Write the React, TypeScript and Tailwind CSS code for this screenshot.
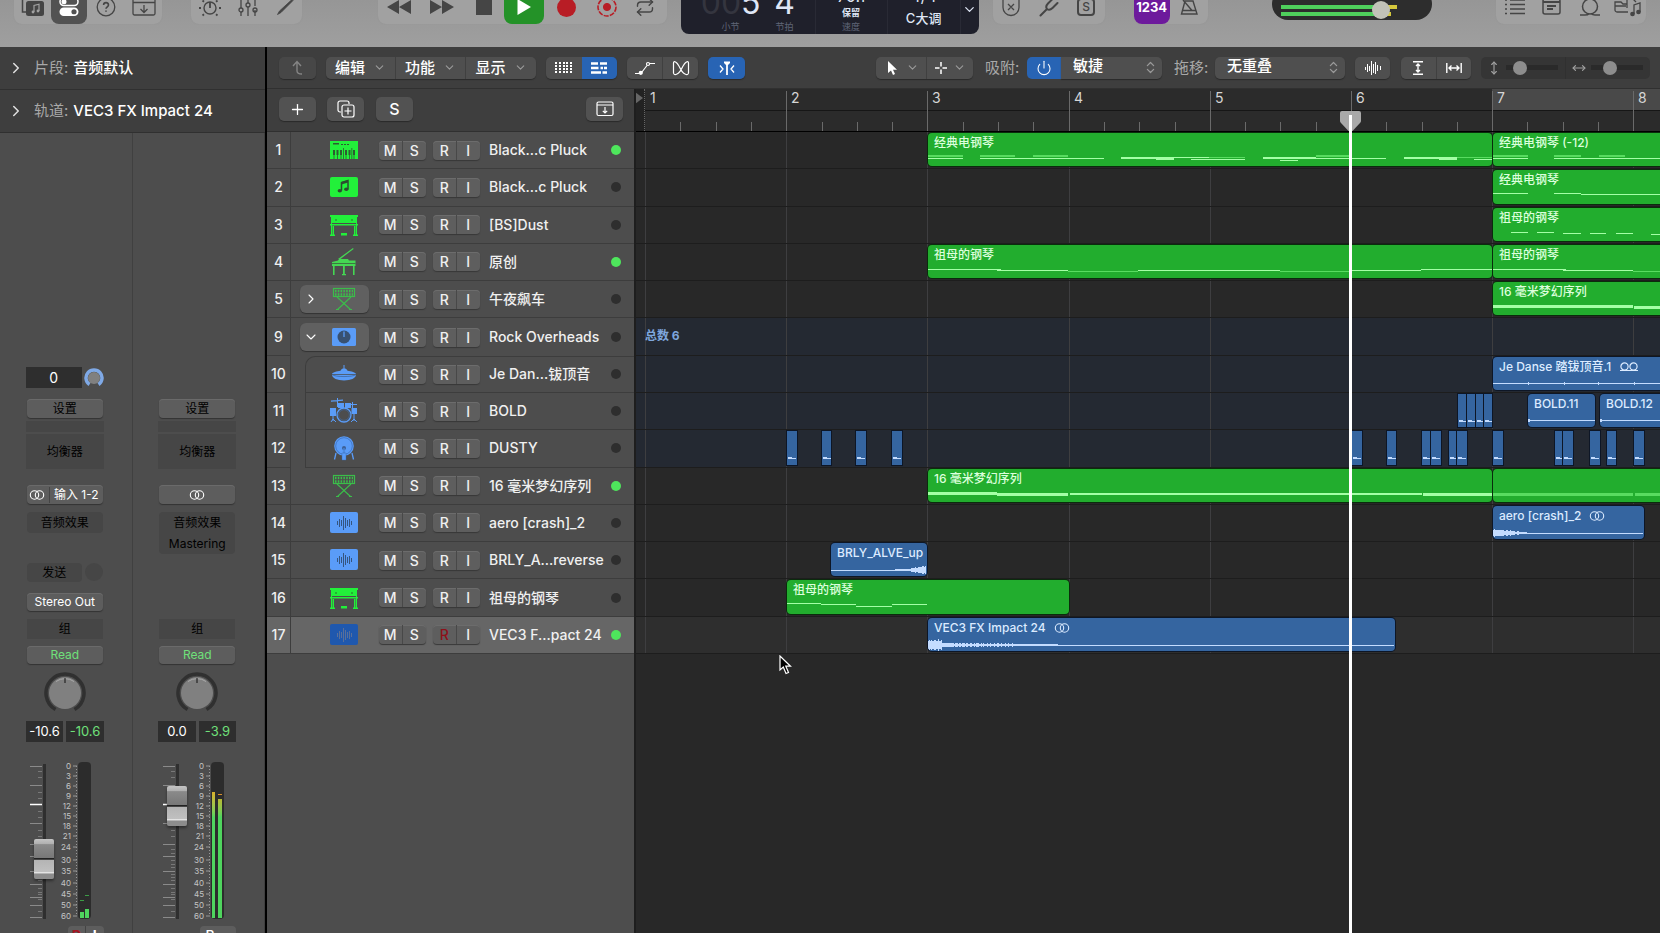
import { useState } from "react";
import type { ReactNode } from "react";
import { ChevronDown, ChevronRight, ChevronsUpDown, MoveHorizontal, MoveVertical, Plus, Power, Repeat } from "lucide-react";
import clsx from "clsx";

type Shape = [x: number, y: number, w: number, h: number, dim?: boolean];

type Clip = {
  start: number;
  end: number;
  label?: string;
  badge?: "stereo" | "loop";
  slim?: boolean;
  shapes?: Shape[];
  wave?: "impact" | "crash" | "reverse";
};

type Track = {
  num: number;
  name: string;
  icon: keyof typeof trackIcons;
  color: "green" | "blue";
  active?: boolean;
  folder?: "open" | "closed";
  child?: boolean;
  selected?: boolean;
  armed?: boolean;
  clips: Clip[];
};

// Horizontal zoom of the arrange area
const BAR = 141.2;
const ORIGIN = 11;
const barToPx = (bar: number) => Math.round(ORIGIN + (bar - 1) * BAR);

const GREEN = "#22f03a";
const BLUE = "#5a9cf8";
const BARS = [1, 2, 3, 4, 5, 6, 7, 8];

const audioBars = "M7 12h1v4H7zM9 10h1v8H9zM11 11h1v6h-1zM13 7h1v14h-1zM15 9h1v10h-1zM17 11h1v6h-1zM19 10h1v8h-1zM21 12h1v4h-1z";

const trackIcons = {
  synth: (
    <g fill={GREEN}>
      <path d="M0 5h28v18H0z" />
      <path d="M3 7h6v1.500H3zM11 8h2v1h-2zM14 8h2v1h-2zM17 8h2v1h-2z" fill="#2c5c30" />
      <path d="M3 14h2v5H3zM6.500 14h2v5h-2zM10 14h2v5h-2zM15 14h2v5h-2zM18.500 14h2v5h-2zM23 14h2v5h-2z" fill="#2c5c30" />
      <path d="M4 19v4M7.500 19v4M11 19v4M13.500 12v11M16 19v4M19.500 19v4M21.800 12v11M24 19v4" stroke="#2c5c30" strokeWidth=".8" />
    </g>
  ),
  note: (
    <g>
      <rect y="4" width="28" height="20" rx="2" fill={GREEN} />
      <path d="M11.500 17.500V9.500l6.500-2v8.500" fill="none" stroke="#2c4c30" strokeWidth="1.500" />
      <path d="M11.500 9l6.500-2v2.500l-6.500 2z" fill="#2c4c30" />
      <ellipse cx="9.800" cy="17.800" rx="2.200" ry="1.700" fill="#2c4c30" />
      <ellipse cx="16.300" cy="16.200" rx="2.200" ry="1.700" fill="#2c4c30" />
    </g>
  ),
  upright: (
    <g fill={GREEN}>
      <path d="M0 4h28v2H0zM1 6h26v6H1zM0 13h28v1.500H0z" />
      <path d="M2.500 15H4v9H2.500zM24 15h1.500v9H24zM0 23.500h5V25H0zM23 23.500h5V25h-5zM11 22h6v2.500h-6z" />
      <path d="M1 12h1v12H1zM26 12h1v12h-1z" />
      <circle cx="6" cy="9" r=".8" fill="#2c5c30" />
      <circle cx="22" cy="9" r=".8" fill="#2c5c30" />
    </g>
  ),
  grand: (
    <g fill="#45d653">
      <path d="M8 11L23 0l.6.900L10.500 11z" />
      <path d="M9 11h9l1 1.500h6.500V18H2v-4l6-1.500z" />
      <path d="M2 15.500h23.500" stroke="#3b5c3e" strokeWidth=".8" />
      <path d="M3 18h1.600v9H3zM13 18h1.800v9H13zM23 18h1.600v9H23zM12 26h4v1.200h-4z" />
    </g>
  ),
  stand: (
    <g fill="none" stroke="#3bbd4a">
      <rect x="3.500" y="3.500" width="21" height="8" strokeWidth="1.200" />
      <path d="M5 6h18M5 9.500h18" strokeDasharray="1.500 1.300" strokeWidth="2.600" />
      <path d="M7 12l13.500 12.500M21 12L7.500 24.500M6 24.500h3M19 24.500h3" strokeWidth="1.100" />
    </g>
  ),
  summing: (
    <g>
      <rect x="2" y="5" width="24" height="18" rx="1.500" fill={BLUE} />
      <circle cx="14" cy="14" r="6.500" fill="#385172" />
      <path d="M14 8.500V14" stroke={BLUE} strokeWidth="1.300" />
    </g>
  ),
  cymbal: (
    <g fill={BLUE}>
      <path d="M13.500 5h1v4h-1z" />
      <path d="M2 14c0-1.500 5-2.800 8.500-3.200C11 9 12.500 8.500 14 8.500s3 .5 3.500 2.300C21 11.200 26 12.500 26 14z" />
      <path d="M2 14.800h24c0 3.500-5.500 5.700-12 5.700S2 18.300 2 14.800z" />
      <path d="M2 14.600c3 2.600 21 2.600 24 0" fill="none" stroke="#3a5f92" strokeWidth=".7" />
    </g>
  ),
  drumkit: (
    <g fill={BLUE}>
      <path d="M1 3.500l12-1v1.200l-12 1zM7 1h1v9H7zM19 7h8v1h-8zM22 5h1v6h-1z" />
      <path d="M8 6h6v5H8zM15 6h6v5h-6zM0 11h6v8H0zM21.500 11H27v6h-5.500z" />
      <path d="M3 19v5M1 25l2-3 3 3M24 17v7M21 25l3-3 3 3" stroke={BLUE} fill="none" />
      <circle cx="14" cy="18" r="7" fill="#4d4d4d" stroke={BLUE} strokeWidth="1.300" />
      <circle cx="14" cy="18" r="5.400" fill="none" stroke="#3d6aa5" strokeWidth=".7" />
    </g>
  ),
  kick: (
    <g fill={BLUE}>
      <circle cx="14" cy="12" r="9.800" />
      <circle cx="14" cy="12" r="8.300" fill="none" stroke="#3a6cb4" strokeWidth=".7" />
      <path d="M6 19l-1.500 6.500M22 19l1.500 6.500" stroke={BLUE} strokeWidth="1.300" />
      <circle cx="14" cy="14" r="2" fill="#3d5f94" />
      <path d="M13.400 14h1.200v5h-1.200zM12 19h4v7h-4z" stroke="#3a6cb4" strokeWidth=".4" />
    </g>
  ),
  audio: (
    <g>
      <rect y="3" width="28" height="21" rx="2" fill={BLUE} />
      <path d={audioBars} fill="#35557f" />
    </g>
  ),
  audioDim: (
    <g>
      <rect y="3" width="28" height="21" rx="2" fill="#1f58ae" />
      <path d={audioBars} fill="#5a7099" />
    </g>
  ),
};

const pluckNotes: Shape[] = [
  [0, 22, 35, 2, true], [0, 25, 35, 1],
  [52, 22, 35, 2, true], [52, 25, 124, 1], [105, 22, 35, 2, true],
  [193, 24, 53, 2], [228, 26, 18, 1], [246, 24, 35, 1], [263, 26, 18, 1], [281, 24, 36, 1, true], [281, 26, 36, 1],
  [335, 24, 35, 2], [352, 27, 18, 1], [370, 24, 18, 2], [388, 22, 35, 2, true], [388, 25, 70, 1],
  [476, 24, 53, 2], [511, 26, 18, 1], [529, 24, 36, 1, true], [546, 26, 19, 1],
];

const hits = (starts: number[], width = 0.075): Clip[] =>
  starts.map((start) => ({ start, end: start + width, slim: true, shapes: [[1, 26, 4, 2], [4, 27, 5, 1]] as Shape[] }));

const tracks: Track[] = [
  {
    num: 1, name: "Black...c Pluck", icon: "synth", color: "green", active: true,
    clips: [
      { start: 3, end: 7, label: "经典电钢琴", shapes: pluckNotes },
      { start: 7, end: 9, label: "经典电钢琴 (-12)", shapes: [[0, 22, 35, 2, true], [0, 25, 35, 1], [61, 22, 27, 2, true], [61, 25, 230, 1], [106, 22, 26, 2, true]] },
    ],
  },
  {
    num: 2, name: "Black...c Pluck", icon: "note", color: "green",
    clips: [{ start: 7, end: 9, label: "经典电钢琴", shapes: [[0, 23, 35, 1], [61, 23, 27, 1], [88, 24, 200, 1]] }],
  },
  {
    num: 3, name: "[BS]Dust", icon: "upright", color: "green",
    clips: [{ start: 7, end: 9, label: "祖母的钢琴", shapes: [[18, 24, 17, 1], [44, 24, 17, 1], [70, 25, 18, 1], [97, 25, 16, 1], [123, 25, 17, 1], [158, 26, 17, 1]] }],
  },
  {
    num: 4, name: "原创", icon: "grand", color: "green", active: true,
    clips: [
      { start: 3, end: 7, label: "祖母的钢琴", shapes: [[0, 24, 73, 1], [69, 25, 71, 1], [140, 26, 70, 1, true], [210, 25, 142, 1], [352, 26, 72, 1, true], [424, 25, 69, 1], [493, 24, 72, 1]] },
      { start: 7, end: 9, label: "祖母的钢琴", shapes: [[0, 24, 73, 1], [70, 25, 70, 1], [140, 26, 140, 1, true]] },
    ],
  },
  {
    num: 5, name: "午夜飙车", icon: "stand", color: "green", folder: "closed",
    clips: [{ start: 7, end: 9, label: "16 毫米梦幻序列", shapes: [[0, 23, 140, 3], [141, 24, 140, 3]] }],
  },
  { num: 9, name: "Rock Overheads", icon: "summing", color: "blue", folder: "open", clips: [] },
  {
    num: 10, name: "Je Dan...钹顶音", icon: "cymbal", color: "blue", child: true,
    clips: [{ start: 7, end: 9, label: "Je Danse 踏钹顶音.1", badge: "loop", shapes: [[0, 26, 290, 1], [35, 25, 1, 3], [71, 25, 1, 3], [105, 25, 1, 3], [141, 25, 1, 3]] }],
  },
  {
    num: 11, name: "BOLD", icon: "drumkit", color: "blue", child: true,
    clips: [
      ...hits([6.75, 6.8125, 6.875, 6.9375], 0.0625),
      { start: 7.25, end: 7.73, label: "BOLD.11", shapes: [[0, 26, 100, 1], [0, 25, 2, 3]] },
      { start: 7.755, end: 9, label: "BOLD.12", shapes: [[0, 26, 200, 1], [0, 25, 2, 3]] },
    ],
  },
  {
    num: 12, name: "DUSTY", icon: "kick", color: "blue", child: true,
    clips: hits([2, 2.245, 2.49, 2.745, 6, 6.245, 6.495, 6.56, 6.685, 6.745, 7, 7.435, 7.495, 7.685, 7.805, 8]),
  },
  {
    num: 13, name: "16 毫米梦幻序列", icon: "stand", color: "green", active: true,
    clips: [
      { start: 3, end: 7, label: "16 毫米梦幻序列", shapes: [[0, 23, 69, 3], [69, 24, 71, 3], [142, 24, 352, 2], [495, 24, 70, 3]] },
      { start: 7, end: 9, shapes: [[0, 24, 69, 3, true], [69, 24, 71, 3, true], [142, 24, 140, 3, true]] },
    ],
  },
  {
    num: 14, name: "aero [crash]_2", icon: "audio", color: "blue",
    clips: [{ start: 7, end: 8.075, label: "aero [crash]_2", badge: "stereo", wave: "crash" }],
  },
  {
    num: 15, name: "BRLY_A...reverse", icon: "audio", color: "blue",
    clips: [{ start: 2.31, end: 3, label: "BRLY_ALVE_up", wave: "reverse" }],
  },
  {
    num: 16, name: "祖母的钢琴", icon: "upright", color: "green",
    clips: [{ start: 2, end: 4, label: "祖母的钢琴", shapes: [[0, 23, 34, 1], [34, 24, 35, 1], [69, 26, 36, 1], [105, 24, 35, 1]] }],
  },
  {
    num: 17, name: "VEC3 F...pact 24", icon: "audioDim", color: "blue", active: true, selected: true, armed: true,
    clips: [{ start: 3, end: 6.315, label: "VEC3 FX Impact 24", badge: "stereo", wave: "impact" }],
  },
];

function wavePath(kind: "impact" | "crash" | "reverse", width: number) {
  let d = "";
  for (let x = 0; x < width - 2; x += 1) {
    const jitter = 0.65 + 0.35 * Math.abs(Math.sin(x * 2.3) * Math.cos(x * 0.9));
    let amp = 0.5;
    if (kind === "impact") amp = x < 14 ? 6 * jitter : x < 130 ? Math.max(1, (2.6 - x / 80) * jitter) : 0.5;
    if (kind === "crash") amp = x < 34 ? Math.max(1, (4.5 - x / 9) * jitter) : 0.5;
    if (kind === "reverse") amp = x > width - 18 ? (5.5 - (width - x) / 5) * jitter : x > 63 ? 1.2 : 0.5;
    d += `M${x} ${27 - amp}h1v${amp * 2}h-1z`;
  }
  return d;
}

function StereoIcon({ className }: { className?: string }) {
  return (
    <svg viewBox="0 0 16 10" className={clsx("h-[10px] w-4", className)} fill="none" stroke="currentColor" strokeWidth="1.100">
      <circle cx="5.500" cy="5" r="4.200" />
      <circle cx="10.500" cy="5" r="4.200" />
    </svg>
  );
}

function LoopIcon() {
  return (
    <svg viewBox="0 0 20 10" className="h-[10px] w-5" fill="none" stroke="currentColor" strokeWidth="1.200">
      <circle cx="5.500" cy="4.500" r="3.600" />
      <circle cx="14.500" cy="4.500" r="3.600" />
      <path d="M1 8.500h18" />
    </svg>
  );
}

/* ---------- Control bar ---------- */

function BarGroup({ className, children }: { className?: string; children: ReactNode }) {
  return <div className={clsx("-mt-3 flex h-9 items-center rounded-lg bg-[#a1a1a1] text-[#454545] shadow-[0_0_1px_#8888]", className)}>{children}</div>;
}

function BarButton({ label, className, children }: { label: string; className?: string; children: ReactNode }) {
  return (
    <button aria-label={label} className={clsx("flex h-9 items-center justify-center pt-0.5", className)}>
      {children}
    </button>
  );
}

function Display() {
  return (
    <div className="flex h-[34px] w-[298px] shrink-0 overflow-hidden rounded-b-lg bg-[#1f202b] text-[#dfe6f5]">
      <div className="flex w-[134px] pl-5">
        <div className="flex w-[60px] flex-col items-center">
          <span className="-mt-[15px] text-[32px] leading-[36px] font-normal">
            <span className="text-[#34353f]">00</span>5
          </span>
          <span className="mt-px text-[9px] leading-[10px] text-[#5f6577]">小节</span>
        </div>
        <div className="flex w-12 flex-col items-center">
          <span className="-mt-[15px] text-[32px] leading-[36px] font-normal">4</span>
          <span className="mt-px text-[9px] leading-[10px] text-[#5f6577]">节拍</span>
        </div>
      </div>
      <div className="flex w-[73px] flex-col items-center border-x border-[#292a35]">
        <span className="-mt-[14px] text-base leading-5">70.1</span>
        <span className="text-[9px] leading-[13px] font-bold">保留</span>
        <span className="text-[9px] leading-[15px] text-[#5f6577]">速度</span>
      </div>
      <div className="flex w-[73px] flex-col items-center border-r border-[#292a35]">
        <span className="-mt-[14px] text-base leading-5">4/4</span>
        <span className="mt-0.5 text-[13px] leading-[20px] font-medium">C大调</span>
      </div>
      <button aria-label="显示模式" className="flex flex-1 justify-center pt-0.5">
        <ChevronDown size={15} />
      </button>
    </div>
  );
}

function MasterVolume() {
  return (
    <div className="relative -mt-3 h-8 w-40 shrink-0 rounded-full bg-[#2d2d2d]">
      <div className="flex flex-col gap-[3px] pt-[17px] pl-[9px]">
        <div className="flex h-1">
          <div className="w-[100px] bg-[#4fcf5c]" />
          <div className="w-4 bg-[#d5c83c]" />
        </div>
        <div className="flex h-1">
          <div className="w-[100px] bg-[#4fcf5c]" />
          <div className="w-[10px] bg-[#d5c83c]" />
        </div>
      </div>
      <input
        type="range"
        aria-label="主音量"
        defaultValue={70}
        className="absolute inset-x-0 top-3 mx-0 h-[20px] w-full appearance-none bg-transparent [&::-webkit-slider-thumb]:size-[18px] [&::-webkit-slider-thumb]:appearance-none [&::-webkit-slider-thumb]:rounded-full [&::-webkit-slider-thumb]:bg-[#c2c2b8]"
      />
    </div>
  );
}

function ControlBar() {
  return (
    <header className="flex h-[47px] shrink-0 items-start overflow-hidden bg-linear-to-b from-[#969696] to-[#9f9f9f] px-[14px]">
      <BarGroup className="w-[148px]">
        <BarButton label="资源库" className="w-[37px]">
          <svg viewBox="0 0 24 24" className="size-6" fill="none" stroke="currentColor" strokeWidth="1.500">
            <path d="M5 17H1.500V3h15a2 2 0 012 2" />
            <rect x="5" y="6" width="18" height="15" rx="2.500" fill="currentColor" stroke="none" />
            <path d="M13 17v-6.500l5-1.300V16" stroke="#a1a1a1" strokeWidth="1.200" />
            <circle cx="12" cy="17" r="1.400" fill="#a1a1a1" stroke="none" />
            <circle cx="17" cy="16" r="1.400" fill="#a1a1a1" stroke="none" />
          </svg>
        </BarButton>
        <BarButton label="检查器" className="w-9 rounded-lg bg-[#525252] text-white">
          <svg viewBox="0 0 20 22" className="h-[22px] w-5">
            <rect x="1" y="2" width="18" height="7.500" rx="3.750" fill="none" stroke="currentColor" strokeWidth="1.500" />
            <circle cx="5" cy="5.800" r="2.500" fill="currentColor" />
            <rect x=".5" y="11.500" width="19" height="8.500" rx="4.250" fill="currentColor" />
            <circle cx="15" cy="15.750" r="2.600" fill="#525252" />
          </svg>
        </BarButton>
        <BarButton label="快速帮助" className="w-[38px]">
          <svg viewBox="0 0 20 20" className="size-5" fill="none" stroke="currentColor" strokeWidth="1.300">
            <circle cx="10" cy="10" r="8.800" />
            <path d="M7.600 8c0-3.200 4.900-3.200 4.900 0 0 1.800-2.500 1.800-2.500 3.800M10 13.500v1.300" strokeWidth="1.600" />
          </svg>
        </BarButton>
        <BarButton label="工具栏" className="flex-1">
          <svg viewBox="0 0 24 20" className="h-5 w-6" fill="none" stroke="currentColor" strokeWidth="1.300">
            <rect x="1" y="1" width="22" height="17" rx="1.500" />
            <path d="M1 5.500h22M12 8v7M8.500 12l3.500 3.500 3.500-3.500" />
          </svg>
        </BarButton>
      </BarGroup>
      <BarGroup className="ml-[29px] w-[111px]">
        <BarButton label="智能控制" className="w-[38px]">
          <svg viewBox="0 0 24 22" className="h-[22px] w-6" fill="none" stroke="currentColor" strokeWidth="1.400">
            <circle cx="12" cy="12" r="6" />
            <path d="M12 6v6M12 1v2M4.500 4.500l1.500 1.300M19.500 4.500L18 5.800M1 12h2M21 12h2M4.500 19.500L6 18.200M19.500 19.500L18 18.200" strokeWidth="1.800" />
          </svg>
        </BarButton>
        <BarButton label="混音器" className="w-[38px]">
          <svg viewBox="0 0 20 20" className="size-5" fill="none" stroke="currentColor" strokeWidth="1.300">
            <path d="M3 0v11M3 15v4M10 0v6M10 10v9M17 0v9M17 13v6" />
            <circle cx="3" cy="13" r="2" />
            <circle cx="10" cy="8" r="2" />
            <circle cx="17" cy="13" r="2" />
          </svg>
        </BarButton>
        <BarButton label="编辑器" className="flex-1">
          <svg viewBox="0 0 20 20" className="size-5" stroke="currentColor" fill="currentColor">
            <path d="M2.500 17.500l2-3.500L17 2.500l1 1L6 15.500z" strokeWidth=".8" />
          </svg>
        </BarButton>
      </BarGroup>

      <div className="min-w-3 flex-[76]" />

      <BarGroup className="w-[289px]">
        <BarButton label="倒回" className="w-[43px]">
          <svg viewBox="0 0 26 16" className="h-4 w-[26px]" fill="currentColor"><path d="M13 1v14L1 8zM25 1v14L13 8z" /></svg>
        </BarButton>
        <BarButton label="快进" className="w-[43px]">
          <svg viewBox="0 0 26 16" className="h-4 w-[26px]" fill="currentColor"><path d="M13 1v14l12-7zM1 1v14l12-7z" /></svg>
        </BarButton>
        <BarButton label="停止" className="w-[40px]">
          <span className="size-4 bg-[#454545]" />
        </BarButton>
        <BarButton label="播放" className="w-10 rounded-lg bg-[#249228] text-white">
          <svg viewBox="0 0 16 18" className="h-[18px] w-4" fill="currentColor"><path d="M1.500 1v16L15 9z" /></svg>
        </BarButton>
        <BarButton label="录音" className="w-[46px]">
          <span className="size-[19px] rounded-full bg-[#b81d25]" />
        </BarButton>
        <BarButton label="捕捉录音" className="w-[34px]">
          <svg viewBox="0 0 22 22" className="size-[22px]" fill="none" stroke="#b81d25">
            <circle cx="11" cy="11" r="9" strokeWidth="1.600" strokeDasharray="5 1.200" />
            <circle cx="11" cy="11" r="3.600" fill="#b81d25" />
          </svg>
        </BarButton>
        <BarButton label="循环" className="flex-1">
          <Repeat size={20} strokeWidth={1.7} />
        </BarButton>
      </BarGroup>
      <div className="w-[14px]" />
      <Display />
      <div className="w-[14px]" />
      <BarGroup className="w-28">
        <BarButton label="替换" className="w-[37px]">
          <svg viewBox="0 0 18 20" className="h-5 w-[18px]" fill="none" stroke="currentColor" strokeWidth="1.300">
            <path d="M1 1h16v9.500a8 8 0 01-16 0zM6 7l6 6M12 7l-6 6" />
          </svg>
        </BarButton>
        <BarButton label="调音器" className="w-[38px]">
          <svg viewBox="0 0 22 22" className="size-[22px]" fill="none" stroke="currentColor" strokeWidth="2" strokeLinecap="round">
            <path d="M2.500 19.500L9 13M9 13c-1.500-2-.5-4 1-5.500L15 2.500M9 13c2 1.500 4 .5 5.500-1L19.500 7" />
          </svg>
        </BarButton>
        <BarButton label="独奏" className="flex-1">
          <span className="flex size-[18px] items-center justify-center rounded-sm border-2 border-[#454545] text-xs font-medium">S</span>
        </BarButton>
      </BarGroup>
      <BarGroup className="ml-[29px] w-[74px]">
        <BarButton label="预备拍" className="w-9 rounded-lg bg-[#6d1a9c] pt-1 text-[13px] font-bold text-white">
          1234
        </BarButton>
        <BarButton label="节拍器" className="flex-1">
          <svg viewBox="0 0 20 20" className="size-5" fill="none" stroke="currentColor" strokeWidth="1.400">
            <path d="M6 4h8l4 13H2.500zM3.500 13.500h13M4 3l9 10.500" />
          </svg>
        </BarButton>
      </BarGroup>

      <div className="min-w-3 flex-[65]" />
      <MasterVolume />
      <div className="min-w-3 flex-[64]" />

      <BarGroup className="w-[150px]">
        <BarButton label="列表编辑器" className="w-[37px]">
          <svg viewBox="0 0 20 18" className="h-[18px] w-5" stroke="currentColor" strokeWidth="1.500">
            <path d="M0 2h2M0 6.500h2M0 11h2M0 15.500h2M5 2h15M5 6.500h15M5 11h15M5 15.500h15" />
          </svg>
        </BarButton>
        <BarButton label="备忘录" className="w-[38px]">
          <svg viewBox="0 0 20 18" className="h-[18px] w-5" fill="none" stroke="currentColor" strokeWidth="1.500">
            <rect x="1" y="1" width="17" height="15" rx="2" />
            <path d="M1 4h17M5 8h9M5 11h6" strokeWidth="2" />
          </svg>
        </BarButton>
        <BarButton label="循环浏览器" className="w-[38px]">
          <svg viewBox="0 0 22 20" className="h-5 w-[22px]" fill="none" stroke="currentColor" strokeWidth="1.500">
            <path d="M1 18h5c3 0 4-1.500 4-1.500M21 18h-5c-2.500 0-4-1.500-4-1.500" />
            <circle cx="11" cy="9.500" r="7.500" />
          </svg>
        </BarButton>
        <BarButton label="浏览器" className="flex-1">
          <svg viewBox="0 0 28 20" className="h-5 w-7" fill="none" stroke="currentColor" strokeWidth="1.300">
            <path d="M14 15H3a2 2 0 01-2-2V5h6l2 2h4M1 9h11M13 11V1h5l4 4M20 17V8l6-2v9" />
            <circle cx="18.500" cy="17" r="1.700" fill="currentColor" />
            <circle cx="24.500" cy="15" r="1.700" fill="currentColor" />
          </svg>
        </BarButton>
      </BarGroup>
    </header>
  );
}

/* ---------- Inspector ---------- */

const slotBtn = "flex shrink-0 items-center justify-center rounded bg-[#5d5d5d] text-xs shadow-[0_1px_1px_#333,inset_0_1px_0_#6a6a6a]";
const slotDark = "flex shrink-0 items-center justify-center bg-[#464646] text-xs text-black";

const meterLabels: [string, number][] = [
  ["0", 4], ["3", 14], ["6", 24], ["9", 34], ["12", 44], ["15", 54], ["18", 64], ["21", 74],
  ["24", 85], ["30", 98], ["35", 109], ["40", 121], ["45", 132], ["50", 143], ["60", 154],
];
const majorTicks = [4, 23, 61, 82, 94, 109, 122, 135, 143, 155];
const minorTicks = [9, 15, 30, 36, 49, 55, 68, 74, 87, 91, 98, 102, 105, 112, 115, 118, 126, 130, 132, 137, 149];

function FaderScale() {
  return (
    <svg viewBox="0 0 48 158" className="h-[158px] w-12">
      {majorTicks.map((y) => <path key={y} d={`M0 ${y}.500h12`} stroke="#8a8a8a" />)}
      {minorTicks.map((y) => <path key={y} d={`M8 ${y}.500h4`} stroke="#787878" />)}
      <path d="M0 42.500h12" stroke="#fff" strokeWidth="1.500" />
      <rect x="13" y="2" width="3" height="155" fill="#2f2f2f" />
      {meterLabels.map(([text, y]) => (
        <g key={text}>
          <text x="41" y={y + 3} textAnchor="end" fontSize="8" fill="#c4c4c4">{text}</text>
          <path d={`M43 ${y}h4`} stroke="#aaa" strokeWidth=".8" />
        </g>
      ))}
      <path d="M46.500 4v150" stroke="#999" strokeWidth="1" strokeDasharray="1 2" />
    </svg>
  );
}

type StripProps = {
  name: string;
  value: string;
  peak: string;
  fader: number;
  gain?: string;
  input?: string;
  effects: string[];
  output?: string;
  meter: ReactNode;
  footer: ReactNode;
};

function ChannelStrip({ name, value, peak, fader, gain, input, effects, output, meter, footer }: StripProps) {
  return (
    <section aria-label={name} className="flex w-1/2 flex-col items-center border-r border-[#404040] pt-[234px] pr-0.5">
      <div className="flex h-[21px] w-[78px] shrink-0 items-center justify-between text-sm">
        {gain && (
          <>
            <span className="flex h-full w-14 items-center justify-center bg-[#2e2e2e] text-white">{gain}</span>
            <svg viewBox="0 0 20 20" className="size-5">
              <path d="M5.500 16.500a8 8 0 119 0" fill="none" stroke="#7fa9e6" strokeWidth="3.500" />
              <circle cx="10" cy="10" r="6" fill="#808080" />
            </svg>
          </>
        )}
      </div>
      <button className={clsx(slotBtn, "mt-[11px] h-[19px] w-[76px] text-black")}>设置</button>
      <div className="mt-[3px] h-[11px] w-[78px] shrink-0 bg-[#464646]" />
      <button className={clsx(slotDark, "mt-[2px] h-[35px] w-[78px]")}>均衡器</button>
      <button className={clsx(slotBtn, "mt-4 h-[19px] w-[76px] text-white")}>
        <StereoIcon className={input ? "ml-0.5" : ""} />
        {input && <span className="ml-1 flex-1 border-l border-[#444]">{input}</span>}
      </button>
      <div className="mt-2 h-[51px] shrink-0">
        <div className="w-[76px] rounded bg-[#464646]">
          {effects.map((fx) => <button key={fx} className="block h-[21px] w-full text-center text-xs text-black">{fx}</button>)}
        </div>
      </div>
      <div className="flex h-[19px] w-[76px] shrink-0 justify-between">
        {output && (
          <>
            <button className={clsx(slotDark, "w-[55px] rounded")}>发送</button>
            <span className="size-[18px] rounded-full bg-[#464646]" />
          </>
        )}
      </div>
      <div className="mt-[11px] h-[18px] shrink-0">
        {output && <button className={clsx(slotBtn, "h-[18px] w-[76px] whitespace-nowrap text-white")}>{output}</button>}
      </div>
      <button className={clsx(slotDark, "mt-2 h-5 w-[76px]")}>组</button>
      <button className={clsx(slotBtn, "mt-[7px] h-[18px] w-[76px] text-[#6fe07a]")}>Read</button>
      <svg viewBox="0 0 42 42" className="mt-2 size-[42px] shrink-0">
        <path d="M11.500 37.500a19 19 0 1119 0" fill="none" stroke="#303030" strokeWidth="3.500" />
        <circle cx="21" cy="21" r="16" fill="#808080" />
        <path d="M12 9.500a15.500 15.500 0 0118 0" stroke="#aaa" fill="none" />
        <path d="M21 6v5" stroke="#111" />
      </svg>
      <div className="mt-[7px] flex h-[21px] w-[78px] shrink-0 gap-[3px] text-[13px]">
        <span className="flex flex-1 items-center justify-center bg-[#2e2e2e] text-white">{value}</span>
        <span className="flex flex-1 items-center justify-center bg-[#2e2e2e] text-[#6fe07a]">{peak}</span>
      </div>
      <div className="relative mt-[20px] flex shrink-0 pr-2">
        <FaderScale />
        <div className="flex h-[157px] w-[13px] items-end justify-center gap-px rounded-sm bg-[#2c2c2c] pb-px">{meter}</div>
        <input
          type="range"
          aria-label={`${name} 音量`}
          defaultValue={fader}
          className="absolute top-0 left-1 m-0 h-[158px] w-5 appearance-none bg-transparent [direction:rtl] [writing-mode:vertical-lr] [&::-webkit-slider-thumb]:h-10 [&::-webkit-slider-thumb]:w-5 [&::-webkit-slider-thumb]:appearance-none [&::-webkit-slider-thumb]:rounded-xs [&::-webkit-slider-thumb]:bg-[linear-gradient(#c4c4c4_0,#b0b0b0_12%,#8a8a8a_14%,#787878_47%,#222_48%,#222_51%,#b4b4b4_52%,#c0c0c0_82%,#e8e8e8_84%,#8c8c8c_88%)] [&::-webkit-slider-thumb]:shadow-[0_2px_3px_#0006]"
        />
      </div>
      <div className="mt-[6px] w-[78px] shrink-0">{footer}</div>
    </section>
  );
}

function InspectorRow({ label, value }: { label: string; value: string }) {
  return (
    <button className="flex w-full items-center border-b border-[#303030] bg-[#3e3e3e] pl-[7px] text-left text-[15px] whitespace-nowrap text-[#a8a8a8]">
      <ChevronRight size={18} className="shrink-0 text-[#e0e0e0]" />
      <span className="ml-[9px]">{label}:</span>
      <span className="ml-[5px] font-medium text-white">{value}</span>
    </button>
  );
}

function Inspector() {
  return (
    <aside className="flex w-[267px] shrink-0 flex-col border-r-2 border-black bg-[#4d4d4d]">
      <div className="grid h-[86px] shrink-0 grid-rows-2">
        <InspectorRow label="片段" value="音频默认" />
        <InspectorRow label="轨道" value="VEC3 FX Impact 24" />
      </div>
      <div className="flex min-h-0 flex-1 overflow-hidden">
        <ChannelStrip
          name="VEC3 FX Impact 24"
          value="-10.6"
          peak="-10.6"
          fader={35}
          gain="0"
          input="输入 1-2"
          effects={["音频效果"]}
          output="Stereo Out"
          meter={
            <>
              <span className="h-[18px] w-1 border-t border-[#3c9c46]">
                <span className="mt-[11px] block h-[6px] bg-[#4fd45e]" />
              </span>
              <span className="h-[23px] w-1 border-t border-[#3c9c46]">
                <span className="mt-[13px] block h-[9px] bg-[#4fd45e]" />
              </span>
            </>
          }
          footer={
            <div className="ml-auto flex h-5 w-9 rounded-t bg-[#5d5d5d] text-sm leading-5 font-bold">
              <button className="w-1/2 border-r border-[#444] text-[#a31622]">R</button>
              <button className="w-1/2 text-white">I</button>
            </div>
          }
        />
        <ChannelStrip
          name="Stereo Out"
          value="0.0"
          peak="-3.9"
          fader={80}
          effects={["音频效果", "Mastering"]}
          meter={
            <>
              <span className="h-[126px] w-[3px] bg-linear-to-b from-[#d8b02c] via-[#4fd45e] via-20% to-[#4fd45e]" />
              <span className="ml-0.5 h-[124px] w-1 border-t border-[#d8902c]">
                <span className="mt-[4px] block h-[119px] bg-linear-to-b from-[#b8b832] via-[#4fd45e] via-15% to-[#4fd45e]" />
              </span>
            </>
          }
          footer={<button className="ml-auto block h-5 w-9 rounded-t bg-[#5d5d5d] text-sm leading-5 font-medium text-white">Bnc</button>}
        />
      </div>
    </aside>
  );
}

/* ---------- Tracks area toolbar ---------- */

const toolBtn = "flex items-center justify-center bg-[#4f4f4f] text-white";

function ToolGroup({ className, children }: { className?: string; children: ReactNode }) {
  return <div className={clsx("flex h-[22px] shrink-0 overflow-hidden rounded-[5px] shadow-[0_1px_1px_#2a2a2a]", className)}>{children}</div>;
}

function MenuButton({ label }: { label: string }) {
  return (
    <button className={clsx(toolBtn, "w-[70px] gap-2 border-r border-[#404040] text-[15px] leading-[22px] font-medium last:border-r-0")}>
      {label}
      <ChevronDown size={13} className="text-[#9a9a9a]" />
    </button>
  );
}

function ToolSelect({ label, value, className }: { label: string; value: string; className: string }) {
  return (
    <div className="relative h-[22px]">
      <select aria-label={label} className={clsx("block h-[22px] appearance-none bg-[#4f4f4f] pb-1 pl-3 text-[15px] leading-[18px] font-medium text-white shadow-[0_1px_1px_#2a2a2a]", className)}>
        <option>{value}</option>
      </select>
      <ChevronsUpDown size={15} className="pointer-events-none absolute top-[3px] right-1 text-[#9a9a9a]" />
    </div>
  );
}

const zoomSlider =
  "h-4 w-[52px] appearance-none bg-transparent bg-[linear-gradient(#2a2a2a,#2a2a2a)] bg-[length:100%_5px] bg-center bg-no-repeat [&::-webkit-slider-thumb]:size-[14px] [&::-webkit-slider-thumb]:appearance-none [&::-webkit-slider-thumb]:rounded-full [&::-webkit-slider-thumb]:bg-[#8d8d8d]";

function Toolbar() {
  return (
    <div className="flex h-[42px] shrink-0 items-center border-b border-[#303030] bg-[#3e3e3e] pr-[10px] pl-3">
      <ToolGroup className="w-[37px]">
        <button aria-label="返回上一级" className="flex flex-1 items-center justify-center bg-[#474747] text-[#858585]">
          <svg viewBox="0 0 14 16" className="h-4 w-[14px]" fill="none" stroke="currentColor" strokeWidth="1.400">
            <path d="M2 6l4-4.500L10 6M6 2v9q0 3 5 3" />
          </svg>
        </button>
      </ToolGroup>
      <ToolGroup className="ml-[10px]">
        <MenuButton label="编辑" />
        <MenuButton label="功能" />
        <MenuButton label="显示" />
      </ToolGroup>
      <ToolGroup className="ml-[10px] w-[71px]">
        <button aria-label="网格" className={clsx(toolBtn, "flex-1")}>
          <svg viewBox="0 0 17 13" className="h-[13px] w-[17px]" stroke="currentColor" strokeWidth="2" shapeRendering="crispEdges">
            <path d="M0 2h17M0 5h17M0 8h17M0 11h17" strokeWidth="1.500" strokeDasharray="2 1.750" />
          </svg>
        </button>
        <button aria-label="轨道显示" className="flex flex-1 items-center justify-center bg-[#2864b4] text-white">
          <svg viewBox="0 0 16 12" className="h-3 w-4" stroke="currentColor" strokeWidth="2.600">
            <path d="M0 1.500h7M9 1.500h7M0 6h7.500M9.500 6H12M13 6h3M0 10.500h10M11.500 10.500H16" />
          </svg>
        </button>
      </ToolGroup>
      <ToolGroup className="ml-[10px] w-[71px]">
        <button aria-label="自动化" className={clsx(toolBtn, "flex-1 border-r border-[#404040]")}>
          <svg viewBox="0 0 20 14" className="h-[14px] w-5" fill="none" stroke="currentColor" strokeWidth="1.200">
            <path d="M0 12.500h4M7 11L12 4.500M14.500 2.500H20" />
            <circle cx="5.800" cy="11.800" r="1.500" fill="currentColor" />
            <circle cx="13" cy="3" r="1.500" />
          </svg>
        </button>
        <button aria-label="Flex" className={clsx(toolBtn, "flex-1")}>
          <svg viewBox="0 0 18 16" className="h-4 w-[18px]" fill="none" stroke="currentColor" strokeWidth="1.200">
            <path d="M1.500 13V3q0-2 2-1 2 1 4.500 6t5 6q3 1.500 3.500-1V3q0-2-2-1-2 1-4.500 6T5 14q-3 1.500-3.500-1z" />
          </svg>
        </button>
      </ToolGroup>
      <ToolGroup className="ml-[10px] w-[37px]">
        <button aria-label="跟随播放头" className="flex flex-1 items-center justify-center bg-[#2864b4] text-white">
          <svg viewBox="0 0 16 16" className="size-4" fill="none" stroke="currentColor" strokeWidth="1.300">
            <path d="M1 5.500L4 9l-3 3.500M15 5.500L12 9l3 3.500" />
            <path d="M8 3v12" strokeWidth="1.800" />
            <path d="M5 1.500h6v1.500L9 5H7L5 3z" fill="currentColor" stroke="none" />
          </svg>
        </button>
      </ToolGroup>

      <div className="flex-1" />

      <ToolGroup className="w-[97px]">
        <button aria-label="指针工具" className={clsx(toolBtn, "flex-1 gap-2 border-r border-[#404040] pl-1")}>
          <svg viewBox="0 0 11 16" className="h-4 w-[11px]" fill="currentColor"><path d="M1 1v12l3-2.500 2 4.500 2-1-2-4.300h4z" /></svg>
          <ChevronDown size={13} className="text-[#9a9a9a]" />
        </button>
        <button aria-label="选框工具" className={clsx(toolBtn, "flex-1 gap-1.5")}>
          <svg viewBox="0 0 12 12" className="size-3" stroke="currentColor" strokeWidth="1.500"><path d="M6 0v4.500M6 7.500V12M0 6h4.500M7.500 6H12" /></svg>
          <ChevronDown size={13} className="text-[#9a9a9a]" />
        </button>
      </ToolGroup>
      <span className="ml-3 w-[42px] text-[15px] leading-[22px] whitespace-nowrap text-[#a8a8a8]">吸附:</span>
      <button aria-label="吸附开关" className="flex h-[22px] w-[34px] items-center justify-center rounded-l-[5px] bg-[#2864b4] text-white">
        <Power size={16} strokeWidth={1.6} />
      </button>
      <ToolSelect label="吸附" value="敏捷" className="w-[101px] rounded-r-[5px]" />
      <span className="ml-3 w-[41px] text-[15px] leading-[22px] whitespace-nowrap text-[#a8a8a8]">拖移:</span>
      <ToolSelect label="拖移" value="无重叠" className="w-[130px] rounded-[5px]" />
      <ToolGroup className="ml-[10px] w-[35px]">
        <button aria-label="波形缩放" className={clsx(toolBtn, "flex-1")}>
          <svg viewBox="0 0 16 16" className="size-4" fill="currentColor">
            <path d="M0 7h1v3H0zM2 4h1v8H2zM4 6h1v5H4zM6 1h1v14H6zM8 4h1v9H8zM10 2h1v12h-1zM12 5h1v6h-1zM15 6h1v4h-1z" />
          </svg>
        </button>
      </ToolGroup>
      <ToolGroup className="ml-[11px] w-[70px]">
        <button aria-label="垂直自动缩放" className={clsx(toolBtn, "flex-1 border-r border-[#404040]")}>
          <svg viewBox="0 0 14 14" className="size-[14px]" fill="none" stroke="currentColor" strokeWidth="1.400"><path d="M2 .8h10M2 13.200h10M7 3v8M5 5l2-2 2 2M5 9l2 2 2-2" /></svg>
        </button>
        <button aria-label="水平自动缩放" className={clsx(toolBtn, "flex-1")}>
          <svg viewBox="0 0 16 14" className="h-[14px] w-4" fill="none" stroke="currentColor" strokeWidth="1.400"><path d="M.8 2v10M15.200 2v10M3 7h10M5.500 4.500L3 7l2.500 2.500M10.500 4.500L13 7l-2.500 2.500" /></svg>
        </button>
      </ToolGroup>
      <div className="ml-[10px] flex h-[22px] w-[169px] shrink-0 rounded-[5px] bg-[#353535] text-[#a0a0a0]">
        <label className="flex w-1/2 items-center justify-center gap-[5px] border-r border-[#303030]">
          <MoveVertical size={14} />
          <input type="range" aria-label="垂直缩放" defaultValue={18} className={zoomSlider} />
        </label>
        <label className="flex w-1/2 items-center justify-center gap-[5px]">
          <MoveHorizontal size={14} />
          <input type="range" aria-label="水平缩放" defaultValue={32} className={zoomSlider} />
        </label>
      </div>
    </div>
  );
}

/* ---------- Track headers ---------- */

function ButtonPair({ labels, armed }: { labels: [string, string]; armed?: boolean }) {
  return (
    <div className="flex h-[19px] w-[47px] shrink-0 rounded-[4px] bg-[#5e5e5e] text-sm leading-[19px] font-medium text-[#f0f0f0] shadow-[0_1px_1px_#383838,inset_0_1px_0_#6c6c6c]">
      <button className={clsx("w-1/2 border-r border-[#484848]", armed && "text-[#8e1019]")}>{labels[0]}</button>
      <button className="w-1/2">{labels[1]}</button>
    </div>
  );
}

function TrackHeader({ track, firstChild }: { track: Track; firstChild: boolean }) {
  return (
    <li className={clsx("flex", track.selected && "bg-[#666]")}>
      <span className="flex w-6 shrink-0 items-center justify-center border-r border-b border-[#3d3d3d] text-sm font-medium text-[#f0f0f0]">{track.num}</span>
      <div
        className={clsx(
          "flex flex-1 items-center border-[#3d3d3d] pr-[13px]",
          track.folder !== "open" && "border-b",
          track.child && "ml-[14px] border-l",
          firstChild && "rounded-tl-[10px] border-t",
        )}
      >
        <div
          className={clsx(
            "flex h-7 shrink-0 items-center justify-between pr-[11px]",
            track.child ? "w-[63px]" : "ml-[9px] w-[69px]",
            track.folder && "rounded-md bg-[#606060] shadow-[0_1px_1px_#333]",
          )}
        >
          {track.folder ? (
            <button aria-label="展开或折叠" className="pl-[3px] text-white">
              {track.folder === "open" ? <ChevronDown size={16} strokeWidth={1.6} /> : <ChevronRight size={16} strokeWidth={1.6} />}
            </button>
          ) : (
            <span />
          )}
          <svg viewBox="0 0 28 28" className="size-7">{trackIcons[track.icon]}</svg>
        </div>
        <div className="ml-[10px] flex gap-[7px]">
          <ButtonPair labels={["M", "S"]} />
          <ButtonPair labels={["R", "I"]} armed={track.armed} />
        </div>
        <span className="ml-[9px] flex-1 text-sm font-medium whitespace-nowrap text-[#f0f0f0]">{track.name}</span>
        <span className={clsx("size-[10px] shrink-0 rounded-full", track.active ? "bg-[#4ee65c]" : "bg-[#2e2e2e]")} />
      </div>
    </li>
  );
}

const headBtn = "flex h-6 w-[37px] items-center justify-center rounded-[5px] bg-[#525252] text-white shadow-[0_1px_1px_#2a2a2a]";

function TrackHeaders() {
  return (
    <div className="w-[367px] shrink-0 bg-[#4d4d4d]">
      <div className="flex h-[43px] items-center border-b border-[#303030] bg-[#3e3e3e] pr-[11px] pb-0.5 pl-3">
        <button aria-label="添加轨道" className={headBtn}><Plus size={17} strokeWidth={1.8} /></button>
        <button aria-label="复制轨道" className={clsx(headBtn, "ml-[11px]")}>
          <svg viewBox="0 0 18 18" className="size-[18px]" fill="none" stroke="currentColor" strokeWidth="1.200">
            <path d="M4 12H3a2 2 0 01-2-2V3a2 2 0 012-2h7a2 2 0 012 2v1" />
            <rect x="5" y="5" width="12" height="12" rx="2" />
            <path d="M11 7.500v7M7.500 11h7" />
          </svg>
        </button>
        <button aria-label="全局独奏" className={clsx(headBtn, "ml-3 text-base font-medium")}>S</button>
        <button aria-label="全局轨道" className={clsx(headBtn, "ml-auto")}>
          <svg viewBox="0 0 18 16" className="h-4 w-[18px]" fill="none" stroke="currentColor" strokeWidth="1.200">
            <rect x="1" y="1" width="16" height="13.500" rx="1.500" />
            <path d="M1 4h16M9 6v6M6.800 9.800L9 12l2.200-2.200" />
          </svg>
        </button>
      </div>
      <ul className="grid h-[522px] grid-rows-14">
        {tracks.map((track, i) => (
          <TrackHeader key={track.num} track={track} firstChild={!!track.child && !tracks[i - 1].child} />
        ))}
      </ul>
    </div>
  );
}

/* ---------- Arrange area ---------- */

function Ruler() {
  return (
    <div className="relative h-[43px] overflow-hidden border-b border-black bg-[#2b2b2b]">
      <div className="h-[22px] border-b border-[#161616]" />
      <div className="absolute top-0 right-0 h-[21px] bg-[#494949]" style={{ left: barToPx(7) }} />
      <div className="absolute inset-y-0 left-0 w-[11px] border-r border-dotted border-[#666] bg-[#222]" />
      <svg viewBox="0 0 8 12" className="absolute top-[3px] left-px h-3 w-2" fill="#666"><path d="M0 0l8 6-8 6z" /></svg>
      {BARS.map((bar) => (
        <div key={bar}>
          {bar > 1 && <div className="absolute top-[2px] bottom-0 w-px bg-[#6a6a6a]" style={{ left: barToPx(bar) }} />}
          <span className="absolute top-0 text-sm leading-[18px] text-[#d6d6d6]" style={{ left: barToPx(bar) + 5 }}>{bar}</span>
          {[0.25, 0.5, 0.75].map((beat) => (
            <div key={beat} className="absolute bottom-0 h-[9px] w-px bg-[#6a6a6a]" style={{ left: barToPx(bar + beat) }} />
          ))}
        </div>
      ))}
    </div>
  );
}

function Region({ clip, color }: { clip: Clip; color: "green" | "blue" }) {
  const left = barToPx(clip.start);
  const width = barToPx(clip.end) - left;
  const green = color === "green";
  return (
    <div
      className={clsx(
        "absolute top-px bottom-[2px] overflow-hidden ring-1",
        green ? "bg-[#22ad2e] text-[#dcffdc] ring-[#0a2c0c]" : "bg-[#3565a0] text-[#dcebff] ring-[#0d1626]",
        clip.slim ? "rounded-none" : "rounded-[4px]",
      )}
      style={{ left: left + 1, width: width - 1 }}
    >
      <svg className="absolute inset-0 size-full" shapeRendering="crispEdges">
        {clip.shapes?.map(([x, y, w, h, dim], i) => (
          <rect key={i} x={x} y={y} width={w} height={h} fill={green ? (dim ? "#58dc60" : "#a4ffa6") : "#c4dcff"} />
        ))}
        {clip.wave && <path d={wavePath(clip.wave, width)} fill="#c4dcff" />}
      </svg>
      {clip.label && (
        <div className="relative flex items-center gap-2 pl-[6px] text-xs leading-[20px] font-medium whitespace-nowrap">
          {clip.label}
          {clip.badge === "stereo" && <StereoIcon />}
          {clip.badge === "loop" && <LoopIcon />}
        </div>
      )}
    </div>
  );
}

function Lane({ track }: { track: Track }) {
  const stack = track.child || track.folder === "open";
  return (
    <li className={clsx("relative border-b border-[#1d1d1d]", stack ? "bg-[#242932]" : track.selected ? "bg-[#2e2e2e]" : "bg-[#282828]")}>
      {BARS.map((bar) => (
        <div key={bar} className="absolute inset-y-0 w-px bg-[#3e3e40]" style={{ left: barToPx(bar) }} />
      ))}
      {track.folder === "open" && <span className="absolute top-[9px] left-[11px] text-xs leading-[18px] font-bold text-[#7ea6dd]">总数 6</span>}
      {track.clips.map((clip) => <Region key={clip.start} clip={clip} color={track.color} />)}
    </li>
  );
}

function Arrange() {
  const [playhead] = useState(6);
  return (
    <main className="relative min-w-0 flex-1 overflow-hidden bg-[#282828]">
      <Ruler />
      <ul className="grid h-[522px] grid-rows-14">
        {tracks.map((track) => <Lane key={track.num} track={track} />)}
      </ul>
      <div className="pointer-events-none absolute inset-y-0 left-0 w-[2px] bg-[#1e1e1e]" />
      <div className="absolute top-[22px] bottom-0 -ml-[11px] flex w-[21px] justify-center" style={{ left: barToPx(playhead) }}>
        <svg viewBox="0 0 21 20" className="absolute top-0 h-5 w-[21px]" fill="#a9a9a9">
          <path d="M2 0h17q2 0 2 2v8q0 1-1 2l-7.500 8h-4L1 12q-1-1-1-2V2q0-2 2-2z" />
        </svg>
        <div className="relative mt-1 w-[3px] bg-white" />
      </div>
      <svg viewBox="0 0 13 20" className="absolute top-[566px] left-[145px] h-5 w-[13px]" fill="#000" stroke="#fff" strokeWidth="1.200">
        <path d="M1 1v14l3.300-3 2.700 6.500 2.500-1-2.700-6.300h4.700z" />
      </svg>
    </main>
  );
}

export default function App() {
  return (
    <div className="flex h-screen flex-col overflow-hidden bg-[#3e3e3e] font-['Inter','Noto_Sans_CJK_SC',sans-serif]">
      <ControlBar />
      <div className="flex min-h-0 flex-1">
        <Inspector />
        <div className="flex min-w-0 flex-1 flex-col">
          <Toolbar />
          <div className="flex min-h-0 flex-1">
            <TrackHeaders />
            <Arrange />
          </div>
        </div>
      </div>
    </div>
  );
}
